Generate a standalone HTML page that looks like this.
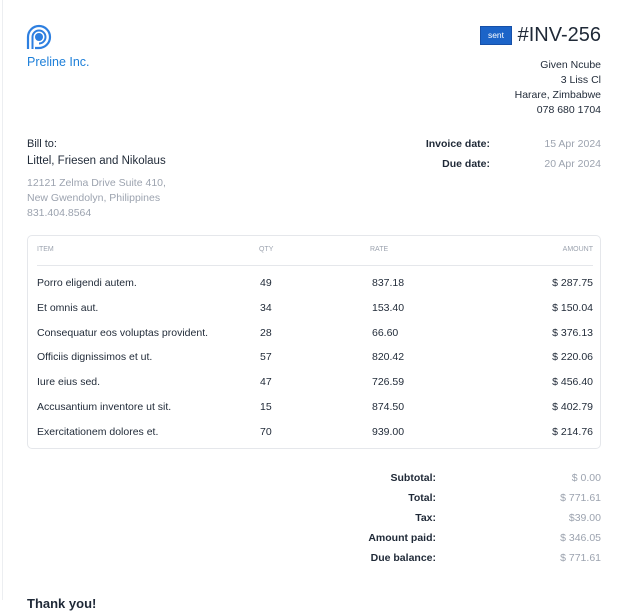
<!DOCTYPE html>
<html><head><style>
body{margin:0;width:625px;height:600px;background:#fff;font-family:"Liberation Sans",sans-serif;position:relative;overflow:hidden;color:#1f2937}
.a{position:absolute;white-space:nowrap}
.r{text-align:right}
.g{color:#9ca3af}
.s{font-size:10.5px}
.b{font-weight:600}
</style></head><body>
<div class="a" style="left:2px;top:0;width:1px;height:600px;background:#eceef1"></div>
<svg class="a" style="left:26px;top:24px" width="27" height="26" viewBox="0 0 27 26" fill="none">
<path d="M2 25V13A11 11 0 1 1 13 24H9" stroke="#2d7fe0" stroke-width="2.2"/>
<path d="M6.5 25V13A6.5 6.5 0 1 1 13 19.5" stroke="#2d7fe0" stroke-width="2"/>
<circle cx="13" cy="13" r="4" fill="#2d7fe0"/>
</svg>
<div class="a" style="left:27px;top:55px;font-size:12.5px;color:#1d7fd9">Preline Inc.</div>
<div class="a" style="left:480px;top:26px;width:32px;height:19px;background:#1c64c8;border:1px solid #1650a8;color:#fff;font-size:8.5px;line-height:17px;text-align:center;box-sizing:border-box">sent</div>
<div class="a r" style="right:24px;top:24px;font-size:20px;color:#1f2937">#INV-256</div>
<div class="a r s" style="right:24px;top:58px;line-height:15px">Given Ncube<br>3 Liss Cl<br>Harare, Zimbabwe<br>078 680 1704</div>
<div class="a" style="left:27px;top:138px;font-size:11px;font-weight:500">Bill to:</div>
<div class="a" style="left:27px;top:155px;font-size:11.5px;font-weight:500">Littel, Friesen and Nikolaus</div>
<div class="a s g" style="left:27px;top:176px;line-height:15px">12121 Zelma Drive Suite 410,<br>New Gwendolyn, Philippines<br>831.404.8564</div>
<div class="a r s b" style="right:135px;top:134px;line-height:20px">Invoice date:<br>Due date:</div>
<div class="a r s g" style="right:24px;top:134px;line-height:20px">15 Apr 2024<br>20 Apr 2024</div>
<div class="a" style="left:27px;top:235px;width:574px;height:214px;border:1px solid #e5e7eb;border-radius:5px;box-sizing:border-box"></div>
<div class="a" style="left:37px;top:265px;width:556px;height:1px;background:#e5e7eb"></div>
<div class="a g" style="left:37px;top:246px;font-size:7px">ITEM</div>
<div class="a g" style="left:259px;top:246px;font-size:7px">QTY</div>
<div class="a g" style="left:370px;top:246px;font-size:7px">RATE</div>
<div class="a g r" style="right:32px;top:246px;font-size:7px">AMOUNT</div>
<div class="a s" style="left:37px;top:271px;line-height:24.8px">Porro eligendi autem.<br>Et omnis aut.<br>Consequatur eos voluptas provident.<br>Officiis dignissimos et ut.<br>Iure eius sed.<br>Accusantium inventore ut sit.<br>Exercitationem dolores et.</div>
<div class="a s" style="left:260px;top:271px;line-height:24.8px">49<br>34<br>28<br>57<br>47<br>15<br>70</div>
<div class="a s" style="left:372px;top:271px;line-height:24.8px">837.18<br>153.40<br>66.60<br>820.42<br>726.59<br>874.50<br>939.00</div>
<div class="a s r" style="right:32px;top:271px;line-height:24.8px">$ 287.75<br>$ 150.04<br>$ 376.13<br>$ 220.06<br>$ 456.40<br>$ 402.79<br>$ 214.76</div>
<div class="a s r b" style="right:189px;top:468px;line-height:20px">Subtotal:<br>Total:<br>Tax:<br>Amount paid:<br>Due balance:</div>
<div class="a s r g" style="right:24px;top:468px;line-height:20px">$ 0.00<br>$ 771.61<br>$39.00<br>$ 346.05<br>$ 771.61</div>
<div class="a b" style="left:27px;top:596px;font-size:13px">Thank you!</div>
</body></html>
